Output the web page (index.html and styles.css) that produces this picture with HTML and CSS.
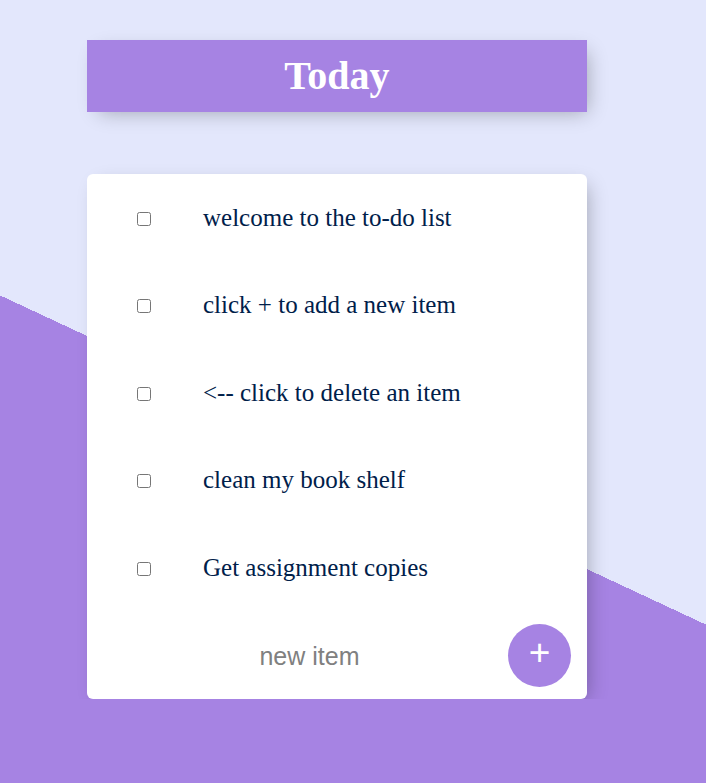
FILE: index.html
```html
<!DOCTYPE html>
<html lang="en">
<head>
<meta charset="utf-8">
<title>To-Do List</title>
<link rel="stylesheet" href="styles.css">
</head>
<body>
  <div class="box heading">
    <h1 class="title">Today</h1>
  </div>
  <div class="box list">
    <div class="item"><input type="checkbox" class="check"><p class="text">welcome to the to-do list</p></div>
    <div class="item"><input type="checkbox" class="check"><p class="text">click + to add a new item</p></div>
    <div class="item"><input type="checkbox" class="check"><p class="text">&lt;-- click to delete an item</p></div>
    <div class="item"><input type="checkbox" class="check"><p class="text">clean my book shelf</p></div>
    <div class="item"><input type="checkbox" class="check"><p class="text">Get assignment copies</p></div>
    <form class="item add-form" onsubmit="return false">
      <input type="text" class="new-input" name="newItem" placeholder="new item" autocomplete="off">
      <button type="submit" class="add-btn">+</button>
    </form>
  </div>
</body>
</html>
```

FILE: styles.css
```css
html {
  background-color: #E3E7FC;
  background-image: linear-gradient(25deg, #A683E3 50%, #E3E7FC 50%);
  background-repeat: no-repeat;
  background-position: 0 0;
  background-size: 100% 920px;
  min-height: 783px;
}

body {
  margin: 0;
  padding: 40px 0 0 87px;
  font-family: "Liberation Serif", "Times New Roman", serif;
}

.box {
  width: 500px;
  background: #fff;
  box-shadow: 6px 6px 19px -6px rgba(0, 0, 0, 0.3);
}

.heading {
  background-color: #A683E3;
  height: 72px;
  display: flex;
  align-items: center;
  justify-content: center;
}

.title {
  margin: 0;
  color: #fff;
  font-size: 40px;
  font-weight: bold;
  line-height: 46px;
  padding-bottom: 1px;
}

.list {
  margin-top: 62px;
  border-radius: 6px;
  height: 525px;
}

.item {
  height: 87.5px;
  display: flex;
  align-items: center;
}

.check {
  appearance: none;
  -webkit-appearance: none;
  box-sizing: border-box;
  width: 14px;
  height: 14px;
  margin: 2px 0 0 50px;
  border: 1px solid #767676;
  border-radius: 2.5px;
  background: #fff;
  flex: none;
}

.text {
  margin: 0 0 0 52px;
  font-size: 25px;
  color: #00204a;
  line-height: 30px;
}

.add-form {
  margin: 0;
  padding-left: 27px;
}

.new-input {
  width: 391px;
  height: 75px;
  border: none;
  padding: 0;
  margin: 2px 0 0 0;
  text-align: center;
  font-family: "Liberation Sans", Arial, sans-serif;
  font-size: 25px;
  background: transparent;
  outline: none;
}

.new-input::placeholder {
  color: grey;
  opacity: 1;
}

.add-btn {
  width: 63px;
  height: 63px;
  margin-left: 3px;
  border-radius: 50%;
  border: 0;
  background-color: #A683E3;
  color: #fff;
  font-family: "Liberation Sans", Arial, sans-serif;
  font-size: 37px;
  line-height: 1;
  padding: 0 0 5px 0;
  display: flex;
  align-items: center;
  justify-content: center;
}
```
